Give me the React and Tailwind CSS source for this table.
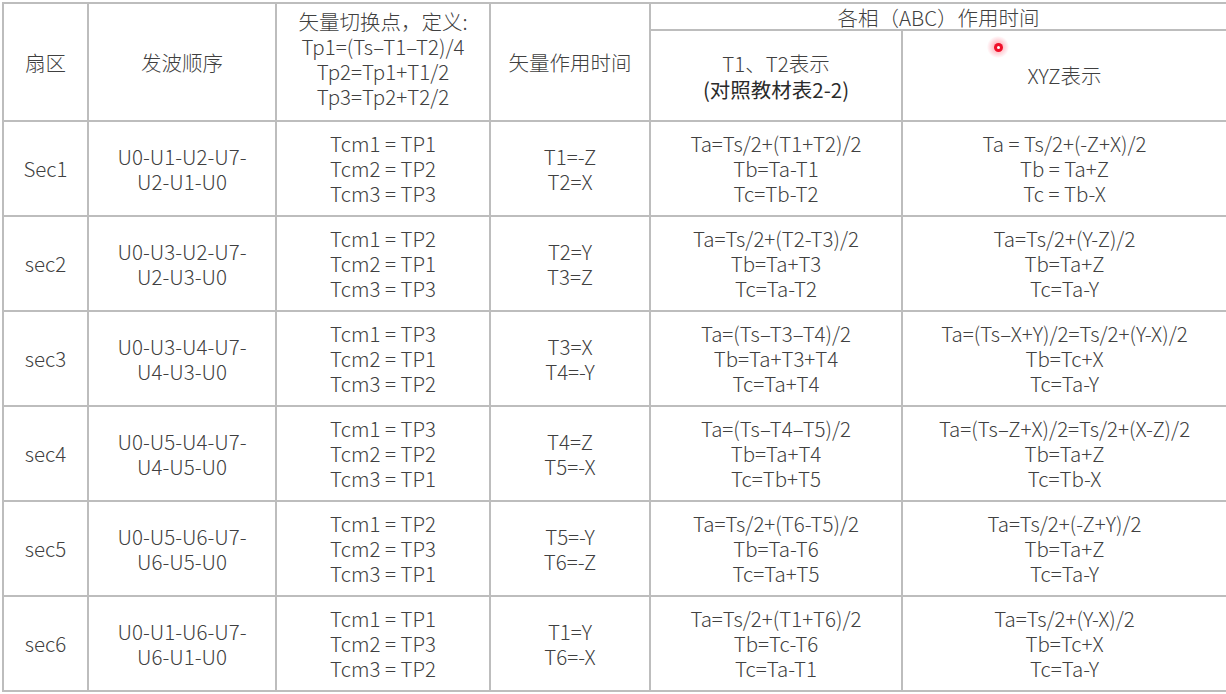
import React from 'react';

const rows = [
  {
    sec: 'Sec1',
    order: ['U0-U1-U2-U7-', 'U2-U1-U0'],
    tcm: ['Tcm1 = TP1', 'Tcm2 = TP2', 'Tcm3 = TP3'],
    t: ['T1=-Z', 'T2=X'],
    abc: ['Ta=Ts/2+(T1+T2)/2', 'Tb=Ta-T1', 'Tc=Tb-T2'],
    xyz: ['Ta = Ts/2+(-Z+X)/2', 'Tb = Ta+Z', 'Tc = Tb-X'],
  },
  {
    sec: 'sec2',
    order: ['U0-U3-U2-U7-', 'U2-U3-U0'],
    tcm: ['Tcm1 = TP2', 'Tcm2 = TP1', 'Tcm3 = TP3'],
    t: ['T2=Y', 'T3=Z'],
    abc: ['Ta=Ts/2+(T2-T3)/2', 'Tb=Ta+T3', 'Tc=Ta-T2'],
    xyz: ['Ta=Ts/2+(Y-Z)/2', 'Tb=Ta+Z', 'Tc=Ta-Y'],
  },
  {
    sec: 'sec3',
    order: ['U0-U3-U4-U7-', 'U4-U3-U0'],
    tcm: ['Tcm1 = TP3', 'Tcm2 = TP1', 'Tcm3 = TP2'],
    t: ['T3=X', 'T4=-Y'],
    abc: ['Ta=(Ts–T3–T4)/2', 'Tb=Ta+T3+T4', 'Tc=Ta+T4'],
    xyz: ['Ta=(Ts–X+Y)/2=Ts/2+(Y-X)/2', 'Tb=Tc+X', 'Tc=Ta-Y'],
  },
  {
    sec: 'sec4',
    order: ['U0-U5-U4-U7-', 'U4-U5-U0'],
    tcm: ['Tcm1 = TP3', 'Tcm2 = TP2', 'Tcm3 = TP1'],
    t: ['T4=Z', 'T5=-X'],
    abc: ['Ta=(Ts–T4–T5)/2', 'Tb=Ta+T4', 'Tc=Tb+T5'],
    xyz: ['Ta=(Ts–Z+X)/2=Ts/2+(X-Z)/2', 'Tb=Ta+Z', 'Tc=Tb-X'],
  },
  {
    sec: 'sec5',
    order: ['U0-U5-U6-U7-', 'U6-U5-U0'],
    tcm: ['Tcm1 = TP2', 'Tcm2 = TP3', 'Tcm3 = TP1'],
    t: ['T5=-Y', 'T6=-Z'],
    abc: ['Ta=Ts/2+(T6-T5)/2', 'Tb=Ta-T6', 'Tc=Ta+T5'],
    xyz: ['Ta=Ts/2+(-Z+Y)/2', 'Tb=Ta+Z', 'Tc=Ta-Y'],
  },
  {
    sec: 'sec6',
    order: ['U0-U1-U6-U7-', 'U6-U1-U0'],
    tcm: ['Tcm1 = TP1', 'Tcm2 = TP3', 'Tcm3 = TP2'],
    t: ['T1=Y', 'T6=-X'],
    abc: ['Ta=Ts/2+(T1+T6)/2', 'Tb=Tc-T6', 'Tc=Ta-T1'],
    xyz: ['Ta=Ts/2+(Y-X)/2', 'Tb=Tc+X', 'Tc=Ta-Y'],
  },
];

const cell = 'border-2 border-[#bdbdbd] text-center align-middle p-0';

const Lines = ({ items }) => (
  <div className="flex flex-col items-center leading-[25px]">
    {items.map((s, i) => (
      <span key={i} className="whitespace-nowrap">{s}</span>
    ))}
  </div>
);

export default function App() {
  return (
    <div
      className="relative w-[1226px] h-[694px] overflow-hidden bg-white pl-[2px] pt-[2px] text-[20.5px] font-light text-[#404040]"
      style={{ fontFamily: '"Noto Sans CJK SC", "Noto Sans", sans-serif' }}
    >
      <table className="table-fixed border-collapse w-[1260px]">
        <colgroup>
          <col className="w-[85px]" />
          <col className="w-[188px]" />
          <col className="w-[214px]" />
          <col className="w-[160px]" />
          <col className="w-[252px]" />
          <col className="w-[361px]" />
        </colgroup>
        <thead>
          <tr className="h-[27px]">
            <th rowSpan={2} className={`${cell} font-light`}>扇区</th>
            <th rowSpan={2} className={`${cell} font-light`}>发波顺序</th>
            <th rowSpan={2} className={`${cell} font-light`}>
              <div className="flex flex-col items-center leading-[25px] pb-[7px]">
                <span>矢量切换点，定义:</span>
                <span>Tp1=(Ts–T1–T2)/4</span>
                <span>Tp2=Tp1+T1/2</span>
                <span>Tp3=Tp2+T2/2</span>
              </div>
            </th>
            <th rowSpan={2} className={`${cell} font-light`}>矢量作用时间</th>
            <th colSpan={2} className={`${cell} font-light leading-[22px] pr-[36px]`}>
              各相（ABC）作用时间
            </th>
          </tr>
          <tr className="h-[91px]">
            <th className={`${cell} font-light`}>
              <div className="flex flex-col items-center leading-[26px]">
                <span>T1、T2表示</span>
                <span className="font-normal text-[#2a2a2a]">(对照教材表2-2)</span>
              </div>
            </th>
            <th className={`${cell} font-light pr-[36px]`}>XYZ表示</th>
          </tr>
        </thead>
        <tbody>
          {rows.map((r) => (
            <tr key={r.sec} className="h-[95px]">
              <td className={cell}>{r.sec}</td>
              <td className={cell}><Lines items={r.order} /></td>
              <td className={cell}><Lines items={r.tcm} /></td>
              <td className={cell}><Lines items={r.t} /></td>
              <td className={cell}><Lines items={r.abc} /></td>
              <td className={`${cell} pr-[36px]`}><Lines items={r.xyz} /></td>
            </tr>
          ))}
        </tbody>
      </table>

      {/* cursor highlight */}
      <div className="absolute left-[987px] top-[36px] w-[22px] h-[22px] rounded-full bg-[radial-gradient(circle,rgba(255,50,70,0.5)_0%,rgba(255,120,140,0.18)_55%,transparent_72%)] flex items-center justify-center">
        <div className="w-[9px] h-[9px] rounded-full bg-[#f0102a] flex items-center justify-center">
          <div className="w-[3px] h-[3px] rounded-full bg-white" />
        </div>
      </div>
    </div>
  );
}
